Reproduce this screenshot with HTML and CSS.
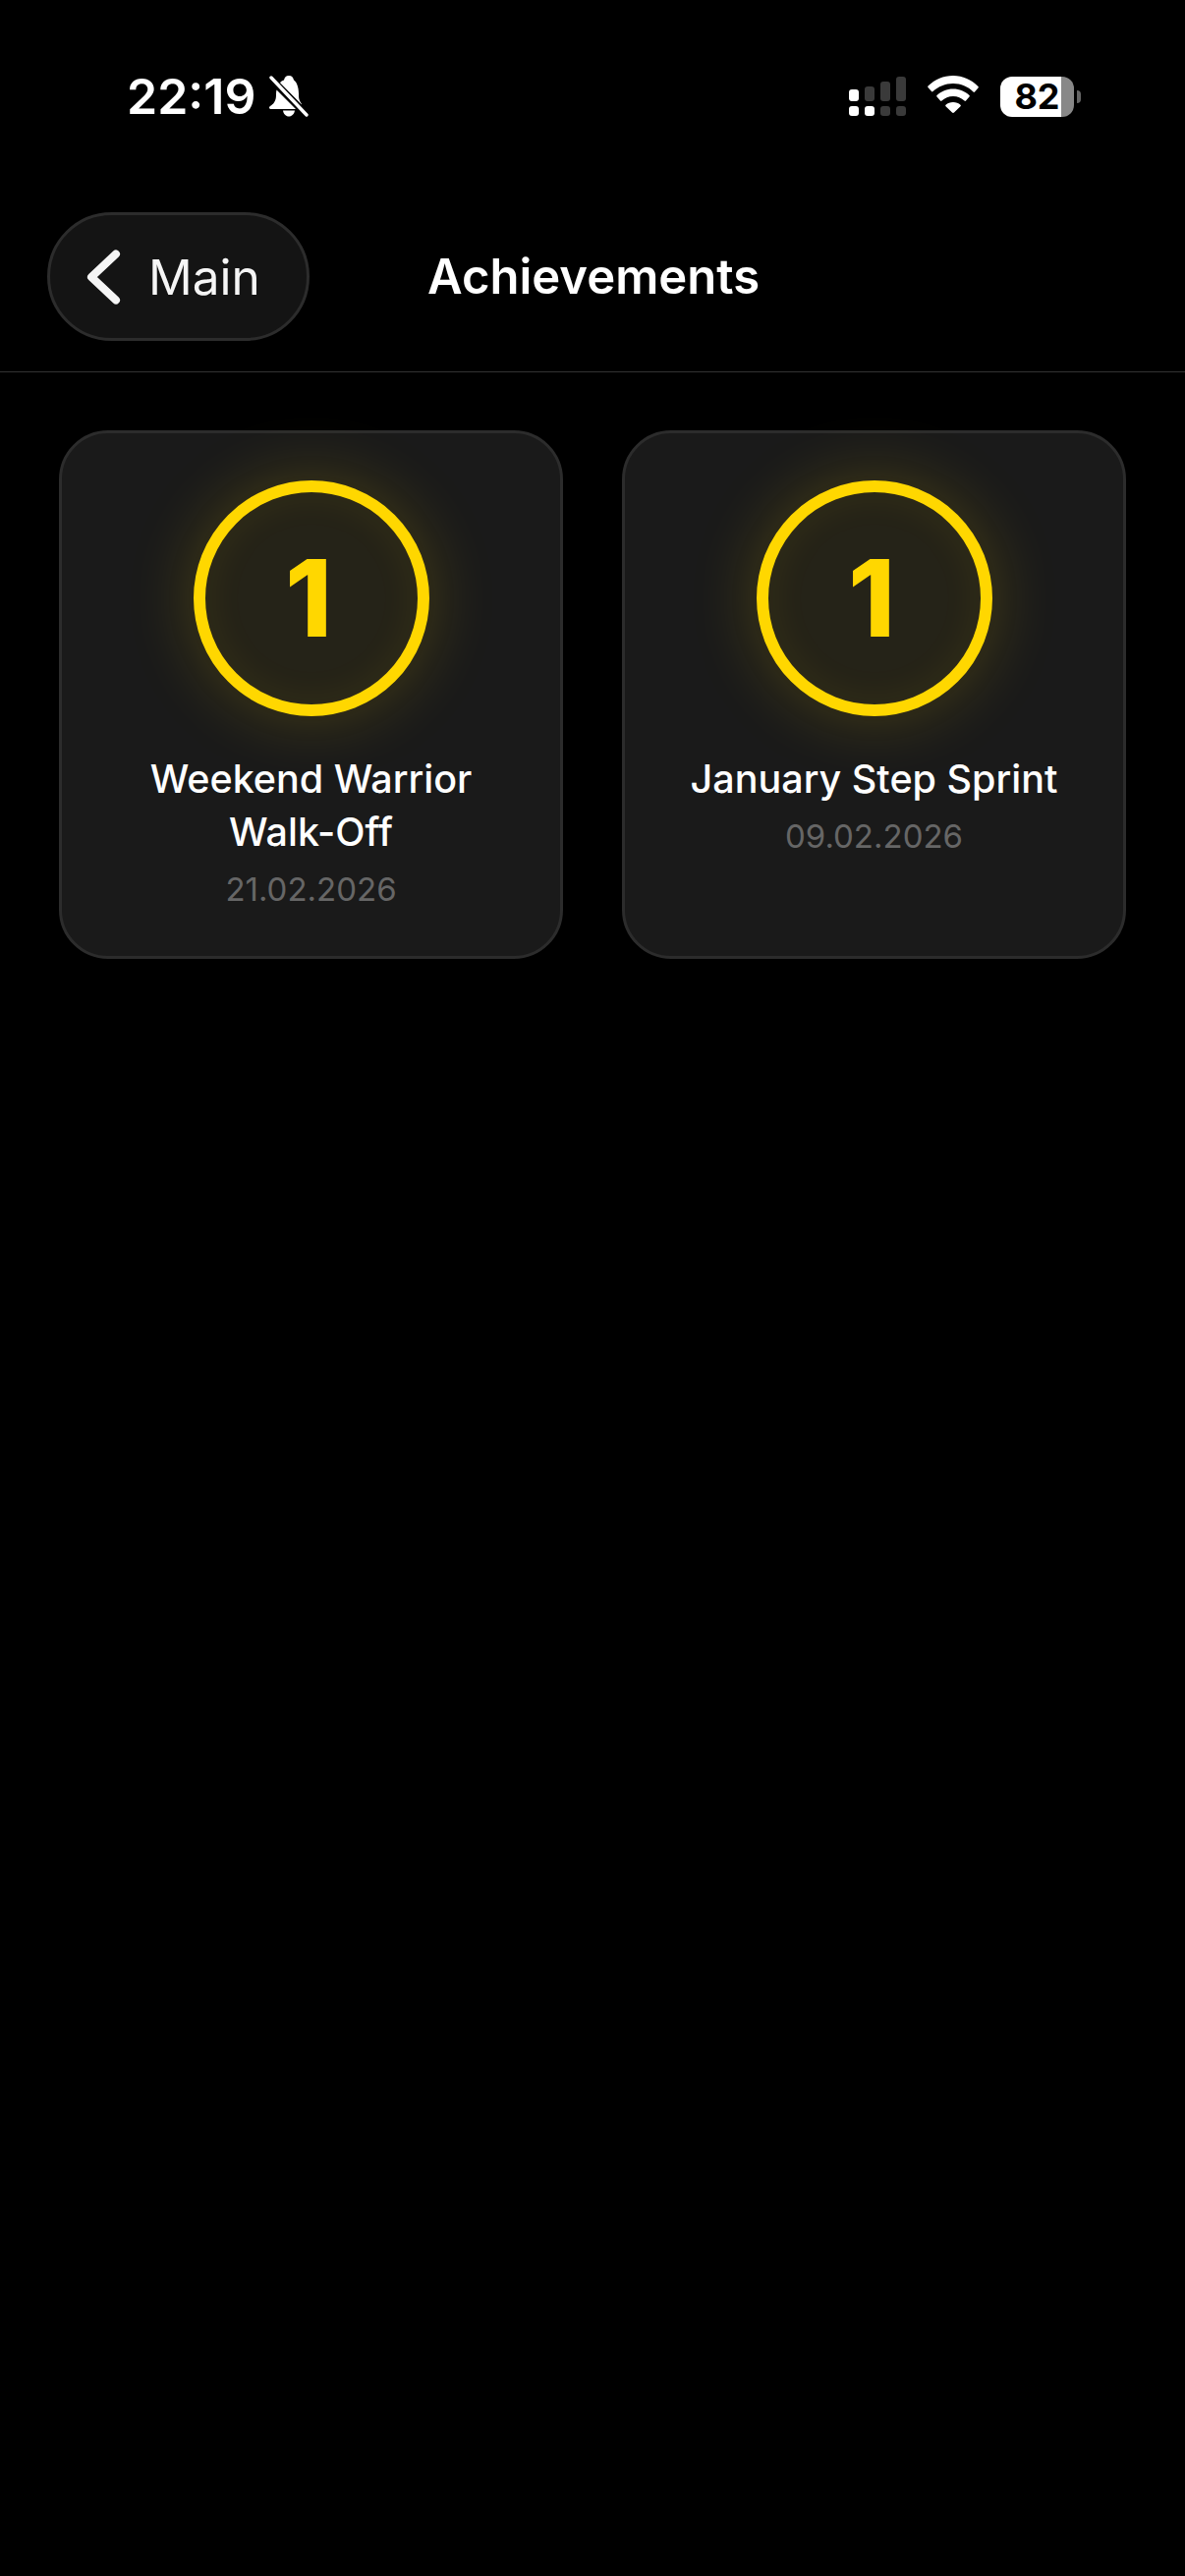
FILE: index.html
```html
<!DOCTYPE html>
<html lang="en">
<head>
    <meta charset="UTF-8">
    <meta name="viewport" content="width=device-width, initial-scale=1.0">
    <title>Achievements</title>
    <link rel="stylesheet" href="styles.css">
</head>
<body>
    <div class="status-bar">
        <div class="status-left">
            <span class="time">22:19</span>
            <svg class="bell" width="40" height="42" viewBox="0 0 40 42">
                <path fill="#fff" d="M20 0c-3 0-4.500 2-5 4.500-1.500.5-3 1.500-4 2.700L33 29.500c0-.5 0-.8-.5-1.500-2-3-2.500-4.500-2.500-9.500 0-7.500-2.500-12.500-5-14C24.500 2 23 0 20 0zM7.500 14.500C7.200 16 7 17 7 18.500c0 5-.5 6.500-2.500 9.500C3 30 0 31 0 32.500 0 33.500 1 34 2.500 34H27zM14 35.500c.5 3.500 3 6 6 6s5.500-2.500 6-6z"/>
                <path stroke="#fff" stroke-width="3.400" stroke-linecap="round" d="M2 2l36 38"/>
            </svg>
        </div>
        <div class="status-right">
            <svg width="58" height="40" viewBox="0 0 58 40">
                <rect x="0" y="30" width="10" height="10" rx="3" fill="#fff"/>
                <rect x="16" y="30" width="10" height="10" rx="3" fill="#fff"/>
                <rect x="32" y="30" width="10" height="10" rx="3" fill="#3a3a3a"/>
                <rect x="48" y="30" width="10" height="10" rx="3" fill="#3a3a3a"/>
                <rect x="0" y="13" width="10" height="12" rx="3" fill="#fff"/>
                <rect x="16" y="10" width="10" height="15" rx="3" fill="#3a3a3a"/>
                <rect x="32" y="5" width="10" height="20" rx="3" fill="#3a3a3a"/>
                <rect x="48" y="0" width="10" height="25" rx="3" fill="#3a3a3a"/>
            </svg>
            <svg class="wifi" width="52" height="38" viewBox="0 0 52 38">
                <path fill="#fff" d="M26 0C16 0 7.500 4 .5 10.500c-.5.500-.5 1 0 1.500l3.500 4c.5.500 1 .5 1.500 0C11 11 18 8 26 8s15 3 20.500 8.500c.5.500 1 .5 1.500 0l3.500-4c.5-.5.5-1 0-1.500C44.500 4 36 0 26 0z"/>
                <path fill="#fff" d="M26 13.500c-6.500 0-12 2.500-16.500 6.500-.5.500-.5 1 0 1.500l3.500 4c.5.500 1 .5 1.500 0 3-2.700 7-4.500 11.500-4.500s8.500 1.800 11.500 4.500c.5.500 1 .5 1.500 0l3.500-4c.5-.5.5-1 0-1.500-4.500-4-10-6.500-16.500-6.500z"/>
                <path fill="#fff" d="M26 27c-3 0-5.500 1-7.500 2.800-.5.500-.5 1 0 1.500l6.500 6.200c.5.500 1.500.5 2 0l6.500-6.200c.5-.5.5-1 0-1.500C31.500 28 29 27 26 27z"/>
            </svg>
            <div class="battery">
                <div class="battery-body"><span>82</span></div>
                <div class="battery-tip"></div>
            </div>
        </div>
    </div>

    <div class="header">
        <div class="back-btn">
            <svg width="38" height="60" viewBox="0 0 38 60">
                <path fill="none" stroke="#f5f5f5" stroke-width="8" stroke-linecap="round" stroke-linejoin="round" d="M32 6.500L7 30l25 23.500"/>
            </svg>
            <span>Main</span>
        </div>
        <div class="title">Achievements</div>
    </div>

    <div class="grid">
        <div class="card">
            <div class="badge">1</div>
            <div class="card-title">Weekend Warrior<br>Walk-Off</div>
            <div class="card-date">21.02.2026</div>
        </div>
        <div class="card">
            <div class="badge">1</div>
            <div class="card-title">January Step Sprint</div>
            <div class="card-date">09.02.2026</div>
        </div>
    </div>
</body>
</html>
```

FILE: styles.css
```css
body {
    font-family: Inter, "Liberation Sans", sans-serif;
    margin: 0;
    padding: 0;
    height: 2622px;
    overflow: hidden;
    background-color: black;
    color: white;
}

.status-bar {
    display: flex;
    justify-content: space-between;
    align-items: center;
    height: 56px;
    padding: 70px 106px 0 129px;
}

.status-left {
    display: flex;
    align-items: center;
    gap: 14px;
}

.time {
    font-size: 50px;
    font-weight: 600;
    line-height: 56px;
}

.status-right {
    display: flex;
    align-items: center;
    gap: 22px;
}

.wifi {
    margin-top: -4px;
}

.battery {
    display: flex;
    align-items: center;
    gap: 3px;
}

.battery-body {
    width: 75px;
    height: 41px;
    border-radius: 12px;
    background: linear-gradient(to right, white 62px, #888 62px);
    color: black;
    font-size: 36px;
    font-weight: 700;
    line-height: 41px;
    text-align: center;
}

.battery-body span {
    display: block;
}

.battery-tip {
    width: 4px;
    height: 13px;
    border-radius: 0 5px 5px 0;
    background-color: #666;
}

.header {
    display: flex;
    align-items: center;
    gap: 120px;
    height: 131px;
    margin-top: 90px;
    padding: 0 0 31px 48px;
    border-bottom: 1px solid #333;
}

.back-btn {
    display: flex;
    align-items: center;
    gap: 27px;
    box-sizing: border-box;
    width: 267px;
    height: 131px;
    padding-left: 35px;
    border-radius: 66px;
    border: 3px solid #2c2c2c;
    background-color: #141414;
    color: #f5f5f5;
    font-size: 49.5px;
}

.title {
    font-size: 49px;
    font-weight: 600;
}

.grid {
    display: grid;
    grid-template-columns: 1fr 1fr;
    gap: 60px;
    padding: 59px 60px 0;
}

.card {
    display: flex;
    flex-direction: column;
    align-items: center;
    box-sizing: border-box;
    height: 538px;
    padding-top: 48px;
    border-radius: 50px;
    border: 3px solid #2c2c2c;
    background-color: #1a1a1a;
    text-align: center;
}

.badge {
    box-sizing: border-box;
    width: 240px;
    height: 240px;
    padding-right: 5px;
    border-radius: 50%;
    border: 12px solid #ffd700;
    background-color: rgba(255, 215, 0, 0.05);
    box-shadow: 0 0 70px rgba(255, 215, 0, 0.2), inset 0 0 40px rgba(255, 215, 0, 0.07);
    color: #ffd700;
    font-size: 108px;
    font-weight: 800;
    line-height: 216px;
    margin-bottom: 37px;
}

.card-title {
    font-size: 39.5px;
    font-weight: 500;
    line-height: 54px;
}

.card-date {
    margin-top: 8px;
    color: #666;
    font-size: 33px;
    line-height: 46px;
}
```
